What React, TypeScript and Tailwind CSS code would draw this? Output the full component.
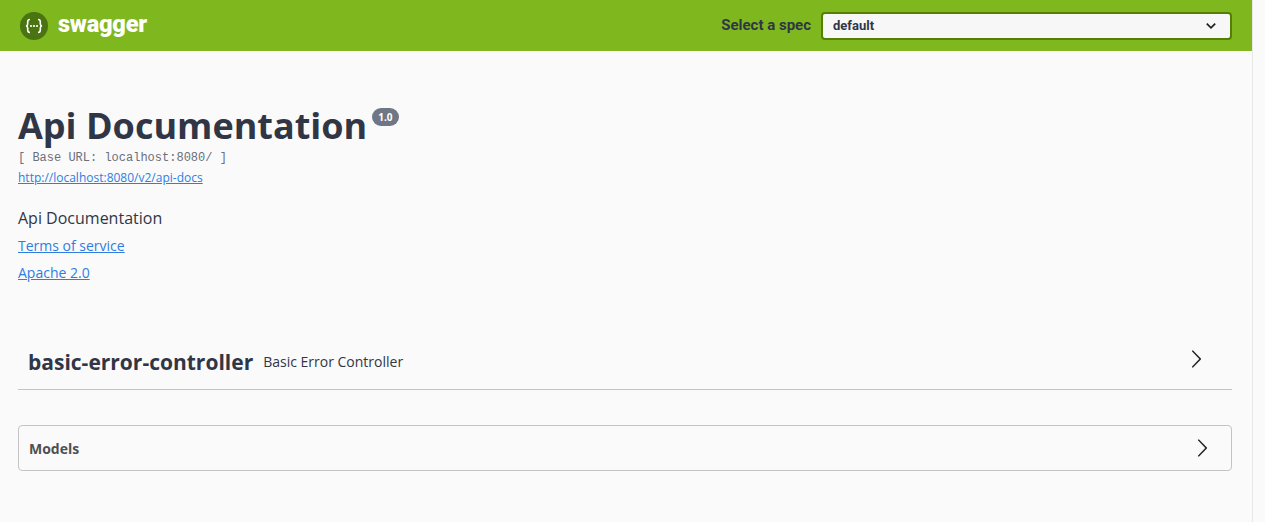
import React from "react";

function Chevron({ className }: { className: string }) {
  return (
    <svg viewBox="0 0 20 20" className={className} fill="currentColor">
      <path d="M13.25 10L6.109 2.58c-.268-.27-.268-.707 0-.979.268-.27.701-.27.969 0l7.83 7.908c.268.271.268.709 0 .979l-7.83 7.908c-.268.271-.701.27-.969 0-.268-.269-.268-.707 0-.979L13.25 10z" />
    </svg>
  );
}

function Logo() {
  return (
    <svg viewBox="0 0 28 28" className="h-7 w-7">
      <circle cx="14" cy="14" r="14" fill="#4a7412" />
      <path d="M10 7.5c-1.8 0-2.3.8-2.3 2.2v2.4c0 1.2-.5 1.8-1.7 1.9 1.2.1 1.7.7 1.7 1.9v2.4c0 1.4.5 2.2 2.3 2.2" fill="none" stroke="#fff" strokeWidth="1.6" />
      <path d="M18 7.5c1.8 0 2.3.8 2.3 2.2v2.4c0 1.2.5 1.8 1.7 1.9-1.2.1-1.7.7-1.7 1.9v2.4c0 1.4-.5 2.2-2.3 2.2" fill="none" stroke="#fff" strokeWidth="1.6" />
      <circle cx="11" cy="14" r="1.1" fill="#fff" />
      <circle cx="14" cy="14" r="1.1" fill="#fff" />
      <circle cx="17" cy="14" r="1.1" fill="#fff" />
    </svg>
  );
}

export default function App() {
  return (
    <div className="flex h-[522px] w-[1265px] overflow-hidden bg-[#fafafa] font-['Open_Sans',sans-serif] text-[#303646]">
      <div className="flex w-[1252px] flex-col">
        <header className="flex h-[51px] shrink-0 items-center justify-between bg-[#7fb71f] pl-5 pr-5">
          <div className="flex items-center gap-[10px]">
            <Logo />
            <span className="pb-[1px] font-['Roboto',sans-serif] text-[23.5px] font-black leading-none tracking-[-0.2px] text-white">swagger</span>
          </div>
          <div className="flex items-center gap-[10px]">
            <span className="font-['Roboto',sans-serif] text-[15px] font-bold text-[#303646]">Select a spec</span>
            <div className="flex h-[28px] w-[411px] items-center justify-between rounded-[4px] border-2 border-[#547f00] bg-[#f7f7f7] pl-[10px] pr-[13px] font-['Roboto',sans-serif] text-[13px] font-bold">
              <span>default</span>
              <svg viewBox="0 0 20 20" className="h-[12px] w-[12px]" fill="none" stroke="#222" strokeWidth="3">
                <path d="M3 6l7 7 7-7" />
              </svg>
            </div>
          </div>
        </header>

        <main className="flex flex-col px-[18px] pr-5">
          <div className="mt-[50px] flex items-start">
            <h1 className="text-[36px] font-bold leading-[50px]">Api Documentation</h1>
            <span className="ml-[5px] mt-[7px] rounded-[9px] bg-[#6f7685] px-[6px] py-[3px] text-[10px] font-bold leading-[12px] text-white">1.0</span>
          </div>
          <div className="mt-[-1px] font-['Liberation_Mono',monospace] text-[12px] leading-[16px] text-[#6a6f7c]">[ Base URL: localhost:8080/ ]</div>
          <a className="mt-[3px] text-[12px] leading-[17px] text-[#2f7de1] underline">http://localhost:8080/v2/api-docs</a>
          <p className="mt-[21px] text-[16px] leading-[22px]">Api Documentation</p>
          <a className="mt-[7px] text-[14px] leading-[19px] text-[#2f7de1] underline">Terms of service</a>
          <a className="mt-[8px] text-[14px] leading-[19px] text-[#2f7de1] underline">Apache 2.0</a>

          <div className="mt-[52px] flex h-[56px] items-center border-b border-[#c4c4c4] pl-[10px] pr-[26px]">
            <span className="mt-[1px] text-[21px] font-bold leading-[28px]">basic-error-controller</span>
            <span className="ml-[10px] text-[14px]">Basic Error Controller</span>
            <Chevron className="mb-[5px] ml-auto h-[20px] w-[20px] text-[#222]" />
          </div>

          <div className="mt-[35px] flex h-[46px] items-center rounded-[4px] border border-[#c4c4c4] pl-[10px] pr-[19px]">
            <span className="text-[14px] font-bold text-[#505050]">Models</span>
            <Chevron className="ml-auto h-[20px] w-[20px] text-[#222]" />
          </div>
        </main>
      </div>
      <div className="w-[13px] shrink-0 border-l border-[#e8e8e8] bg-[#fafafa]" />
    </div>
  );
}
